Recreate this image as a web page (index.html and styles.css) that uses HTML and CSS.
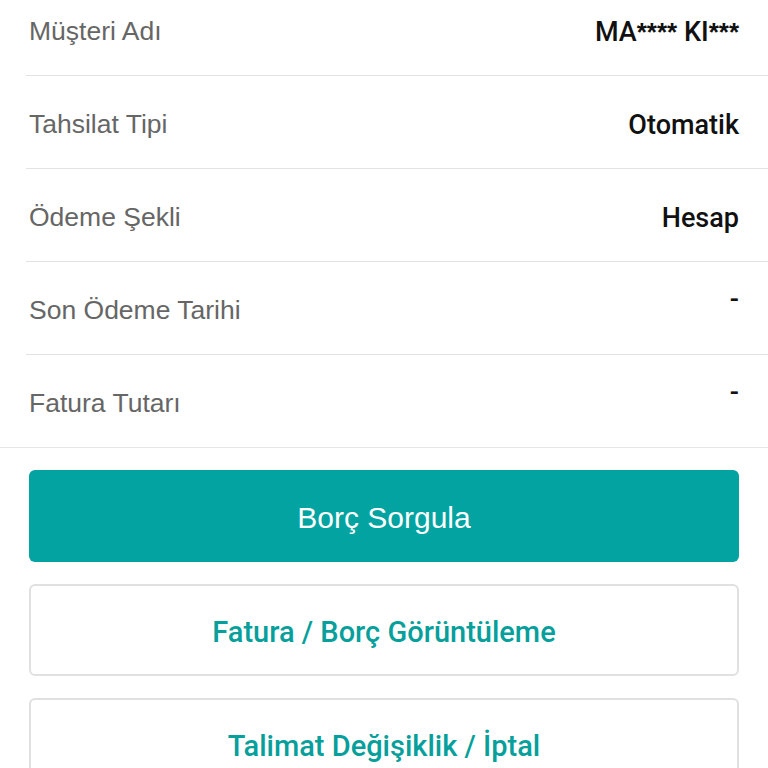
FILE: index.html
```html
<!DOCTYPE html>
<html lang="tr">
<head>
<meta charset="utf-8">
<link rel="stylesheet" href="styles.css">
</head>
<body>
<div class="list">
  <div class="row first">
    <span class="label">Müşteri Adı</span>
    <span class="value">MA<span class="mask">****</span> KI<span class="mask">***</span></span>
  </div>
  <div class="row">
    <span class="label">Tahsilat Tipi</span>
    <span class="value">Otomatik</span>
  </div>
  <div class="row">
    <span class="label">Ödeme Şekli</span>
    <span class="value">Hesap</span>
  </div>
  <div class="row">
    <span class="label">Son Ödeme Tarihi</span>
    <span class="value top">-</span>
  </div>
  <div class="row last">
    <span class="label">Fatura Tutarı</span>
    <span class="value top">-</span>
  </div>
</div>
<div class="actions">
  <button class="btn primary">Borç Sorgula</button>
  <button class="btn outline">Fatura / Borç Görüntüleme</button>
  <button class="btn outline">Talimat Değişiklik / İptal</button>
</div>
</body>
</html>
```
FILE: styles.css
```css
html, body {
  margin: 0;
  padding: 0;
  background: #ffffff;
  font-family: "Liberation Sans", Arial, sans-serif;
}
.list {
  margin-top: -17px;
  border-bottom: 1px solid #e6e6e6;
}
.row {
  height: 92px;
  margin-left: 26px;
  padding: 0 29px 0 3px;
  display: flex;
  align-items: center;
  justify-content: space-between;
  border-bottom: 1px solid #e2e2e2;
}
.row.last {
  border-bottom: none;
}
.label {
  font-size: 26.5px;
  color: #666666;
  padding-top: 5px;
}
.value {
  font-family: Roboto, "Liberation Sans", sans-serif;
  font-size: 27px;
  color: #111;
  font-weight: 500;
  padding-top: 6px;
}
.mask {
  font-family: "Liberation Sans", Arial, sans-serif;
  font-weight: 700;
  font-size: 26px;
}
.value.top {
  align-self: flex-start;
  padding-top: 21px;
}
.actions {
  display: flex;
  flex-direction: column;
  gap: 22px;
  padding: 22px 29px 0 29px;
}
.btn {
  height: 92px;
  border-radius: 6px;
  font-family: "Liberation Sans", Arial, sans-serif;
  display: flex;
  align-items: center;
  justify-content: center;
  padding: 3px 0 0 0;
  margin: 0;
}
.btn.primary {
  background: #02a3a1;
  color: #ffffff;
  border: none;
  font-size: 30px;
}
.btn.outline {
  background: #ffffff;
  color: #079f9b;
  border: 2px solid #e0e0e0;
  font-family: Roboto, "Liberation Sans", sans-serif;
  font-weight: 500;
  font-size: 29px;
}
```
